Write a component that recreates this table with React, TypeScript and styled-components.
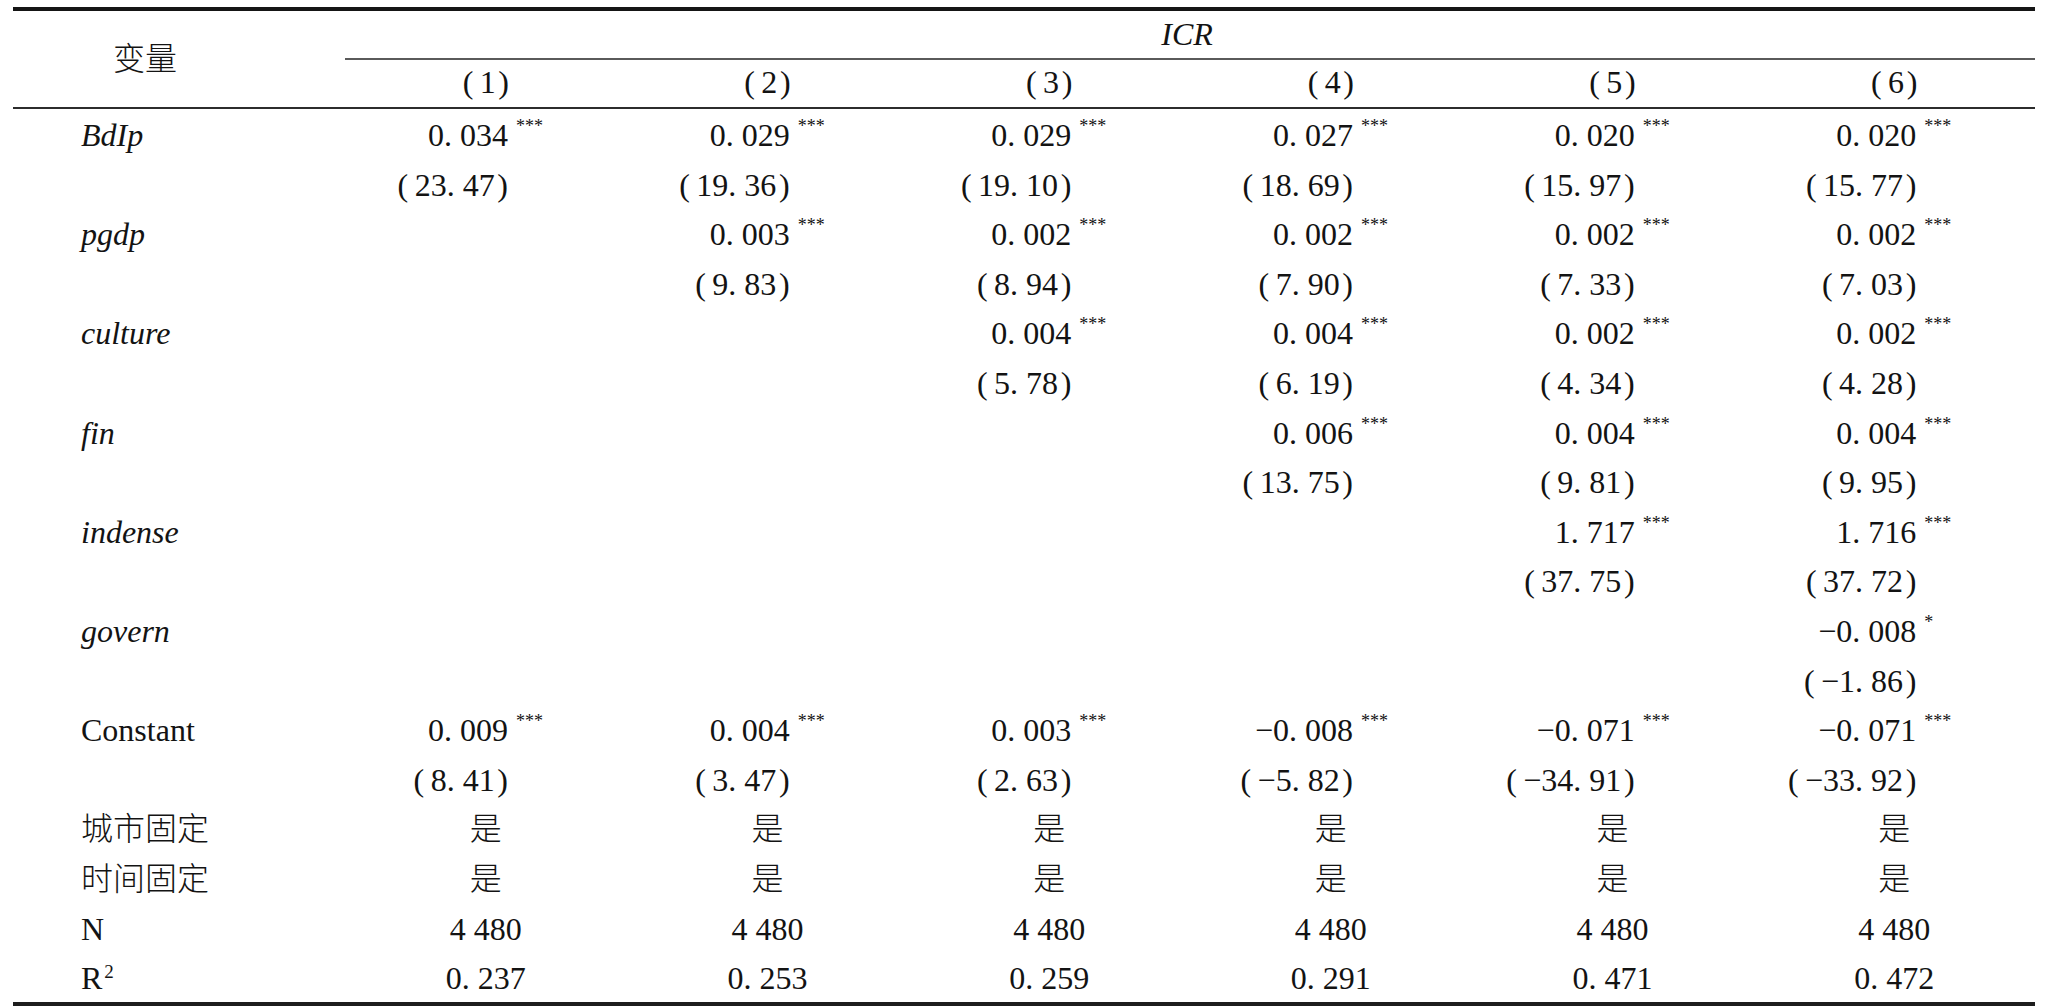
import React from 'react';
import styled, { createGlobalStyle } from 'styled-components';

const GlobalStyle = createGlobalStyle`
  html, body {
    margin: 0;
    padding: 0;
    background: #ffffff;
  }
  body {
    font-family: "Liberation Serif", "Times New Roman", "DejaVu Serif", serif;
    color: #131313;
  }
`;

const COLS = '332px repeat(6, 1fr)';
const ROW_H = 49.6;
const TEXT_DROP = 4;

const Table = styled.div`
  box-sizing: content-box;
  width: 2022px;
  margin: 7px 13px 0;
  border-top: 4px solid #151515;
  border-bottom: 4px solid #1d1d1d;
  font-family: "Liberation Serif", "Times New Roman", serif;
  font-size: 32px;
`;

const Header = styled.div`
  display: grid;
  grid-template-columns: ${COLS};
  grid-template-rows: 49px 47px;
  border-bottom: 2px solid #2c2c2c;
`;

const VarHead = styled.div`
  grid-row: 1 / span 2;
  grid-column: 1;
  display: flex;
  align-items: center;
  padding-left: 100px;
  padding-bottom: 6px;
  font-family: "Noto Sans CJK SC", sans-serif;
  font-weight: 300;
  font-size: 32px;
`;

const GroupHead = styled.div`
  grid-row: 1;
  grid-column: 2 / span 6;
  box-sizing: border-box;
  border-bottom: 2px solid #5a5a5a;
  line-height: 47px;
  text-align: center;
  font-style: italic;
  padding-right: 6px;
`;

const ColHead = styled.div`
  grid-row: 2;
  box-sizing: border-box;
  line-height: 44px;
  text-align: center;
  white-space: nowrap;
`;

const Body = styled.div`
  display: flex;
  flex-direction: column;
`;

const Row = styled.div`
  display: grid;
  grid-template-columns: ${COLS};
  height: ${ROW_H}px;
`;

const Cell = styled.div<{ $align?: 'left' | 'center' }>`
  box-sizing: border-box;
  padding-top: ${TEXT_DROP}px;
  line-height: ${ROW_H - TEXT_DROP}px;
  white-space: nowrap;
  text-align: ${(p) => p.$align ?? 'center'};
`;

const Label = styled(Cell)<{ $italic?: boolean }>`
  text-align: left;
  padding-left: 68px;
  font-style: ${(p) => (p.$italic ? 'italic' : 'normal')};
`;

const Han = styled.span`
  font-family: "Noto Sans CJK SC", sans-serif;
  font-weight: 300;
  line-height: 1;
`;

const Num = styled.span`
  display: inline-block;
  width: 163px;
  text-align: right;
`;

const Stars = styled.span`
  font-size: 18px;
  line-height: 0;
  vertical-align: 14px;
  margin-left: 8px;
`;

const Sup = styled.span`
  font-size: 19px;
  line-height: 0;
  vertical-align: 11px;
  margin-left: 2px;
`;

type Coef = string | null;

interface CoefRow {
  label: string;
  italic: boolean;
  coef: Coef[];
  t: Coef[];
}

const S = '\u2009';
const H = '\u200A';
const M = '\u2212';

const coefRows: CoefRow[] = [
  {
    label: 'BdIp',
    italic: true,
    coef: ['0. 034|***', '0. 029|***', '0. 029|***', '0. 027|***', '0. 020|***', '0. 020|***'],
    t: ['23. 47', '19. 36', '19. 10', '18. 69', '15. 97', '15. 77'],
  },
  {
    label: 'pgdp',
    italic: true,
    coef: [null, '0. 003|***', '0. 002|***', '0. 002|***', '0. 002|***', '0. 002|***'],
    t: [null, '9. 83', '8. 94', '7. 90', '7. 33', '7. 03'],
  },
  {
    label: 'culture',
    italic: true,
    coef: [null, null, '0. 004|***', '0. 004|***', '0. 002|***', '0. 002|***'],
    t: [null, null, '5. 78', '6. 19', '4. 34', '4. 28'],
  },
  {
    label: 'fin',
    italic: true,
    coef: [null, null, null, '0. 006|***', '0. 004|***', '0. 004|***'],
    t: [null, null, null, '13. 75', '9. 81', '9. 95'],
  },
  {
    label: 'indense',
    italic: true,
    coef: [null, null, null, null, '1. 717|***', '1. 716|***'],
    t: [null, null, null, null, '37. 75', '37. 72'],
  },
  {
    label: 'govern',
    italic: true,
    coef: [null, null, null, null, null, `${M}0. 008|*`],
    t: [null, null, null, null, null, `${M}1. 86`],
  },
  {
    label: 'Constant',
    italic: false,
    coef: ['0. 009|***', '0. 004|***', '0. 003|***', `${M}0. 008|***`, `${M}0. 071|***`, `${M}0. 071|***`],
    t: ['8. 41', '3. 47', '2. 63', `${M}5. 82`, `${M}34. 91`, `${M}33. 92`],
  },
];

const YES = <Han>是</Han>;

const plainRows: { label: React.ReactNode; values: React.ReactNode[] }[] = [
  { label: <Han>城市固定</Han>, values: [YES, YES, YES, YES, YES, YES] },
  { label: <Han>时间固定</Han>, values: [YES, YES, YES, YES, YES, YES] },
  { label: 'N', values: ['4 480', '4 480', '4 480', '4 480', '4 480', '4 480'] },
  {
    label: (
      <>
        R<Sup>2</Sup>
      </>
    ),
    values: ['0. 237', '0. 253', '0. 259', '0. 291', '0. 471', '0. 472'],
  },
];

function CoefCell({ value }: { value: Coef }) {
  if (!value) return <Cell $align="left" />;
  const [num, stars] = value.split('|');
  return (
    <Cell $align="left">
      <Num>{num}</Num>
      {stars ? <Stars>{stars}</Stars> : null}
    </Cell>
  );
}

function TCell({ value }: { value: Coef }) {
  if (!value) return <Cell $align="left" />;
  return (
    <Cell $align="left">
      <Num>{`(${S}${value}${H})`}</Num>
    </Cell>
  );
}

export default function App() {
  return (
    <>
      <GlobalStyle />
      <Table>
        <Header>
          <VarHead>变量</VarHead>
          <GroupHead>ICR</GroupHead>
          {[1, 2, 3, 4, 5, 6].map((n) => (
            <ColHead key={n}>{`(${S}${n}${H})`}</ColHead>
          ))}
        </Header>
        <Body>
          {coefRows.map((r) => (
            <React.Fragment key={r.label}>
              <Row>
                <Label $italic={r.italic}>{r.label}</Label>
                {r.coef.map((c, i) => (
                  <CoefCell key={i} value={c} />
                ))}
              </Row>
              <Row>
                <Label />
                {r.t.map((c, i) => (
                  <TCell key={i} value={c} />
                ))}
              </Row>
            </React.Fragment>
          ))}
          {plainRows.map((r, idx) => (
            <Row key={idx}>
              <Label>{r.label}</Label>
              {r.values.map((v, i) => (
                <Cell key={i}>{v}</Cell>
              ))}
            </Row>
          ))}
        </Body>
      </Table>
    </>
  );
}
